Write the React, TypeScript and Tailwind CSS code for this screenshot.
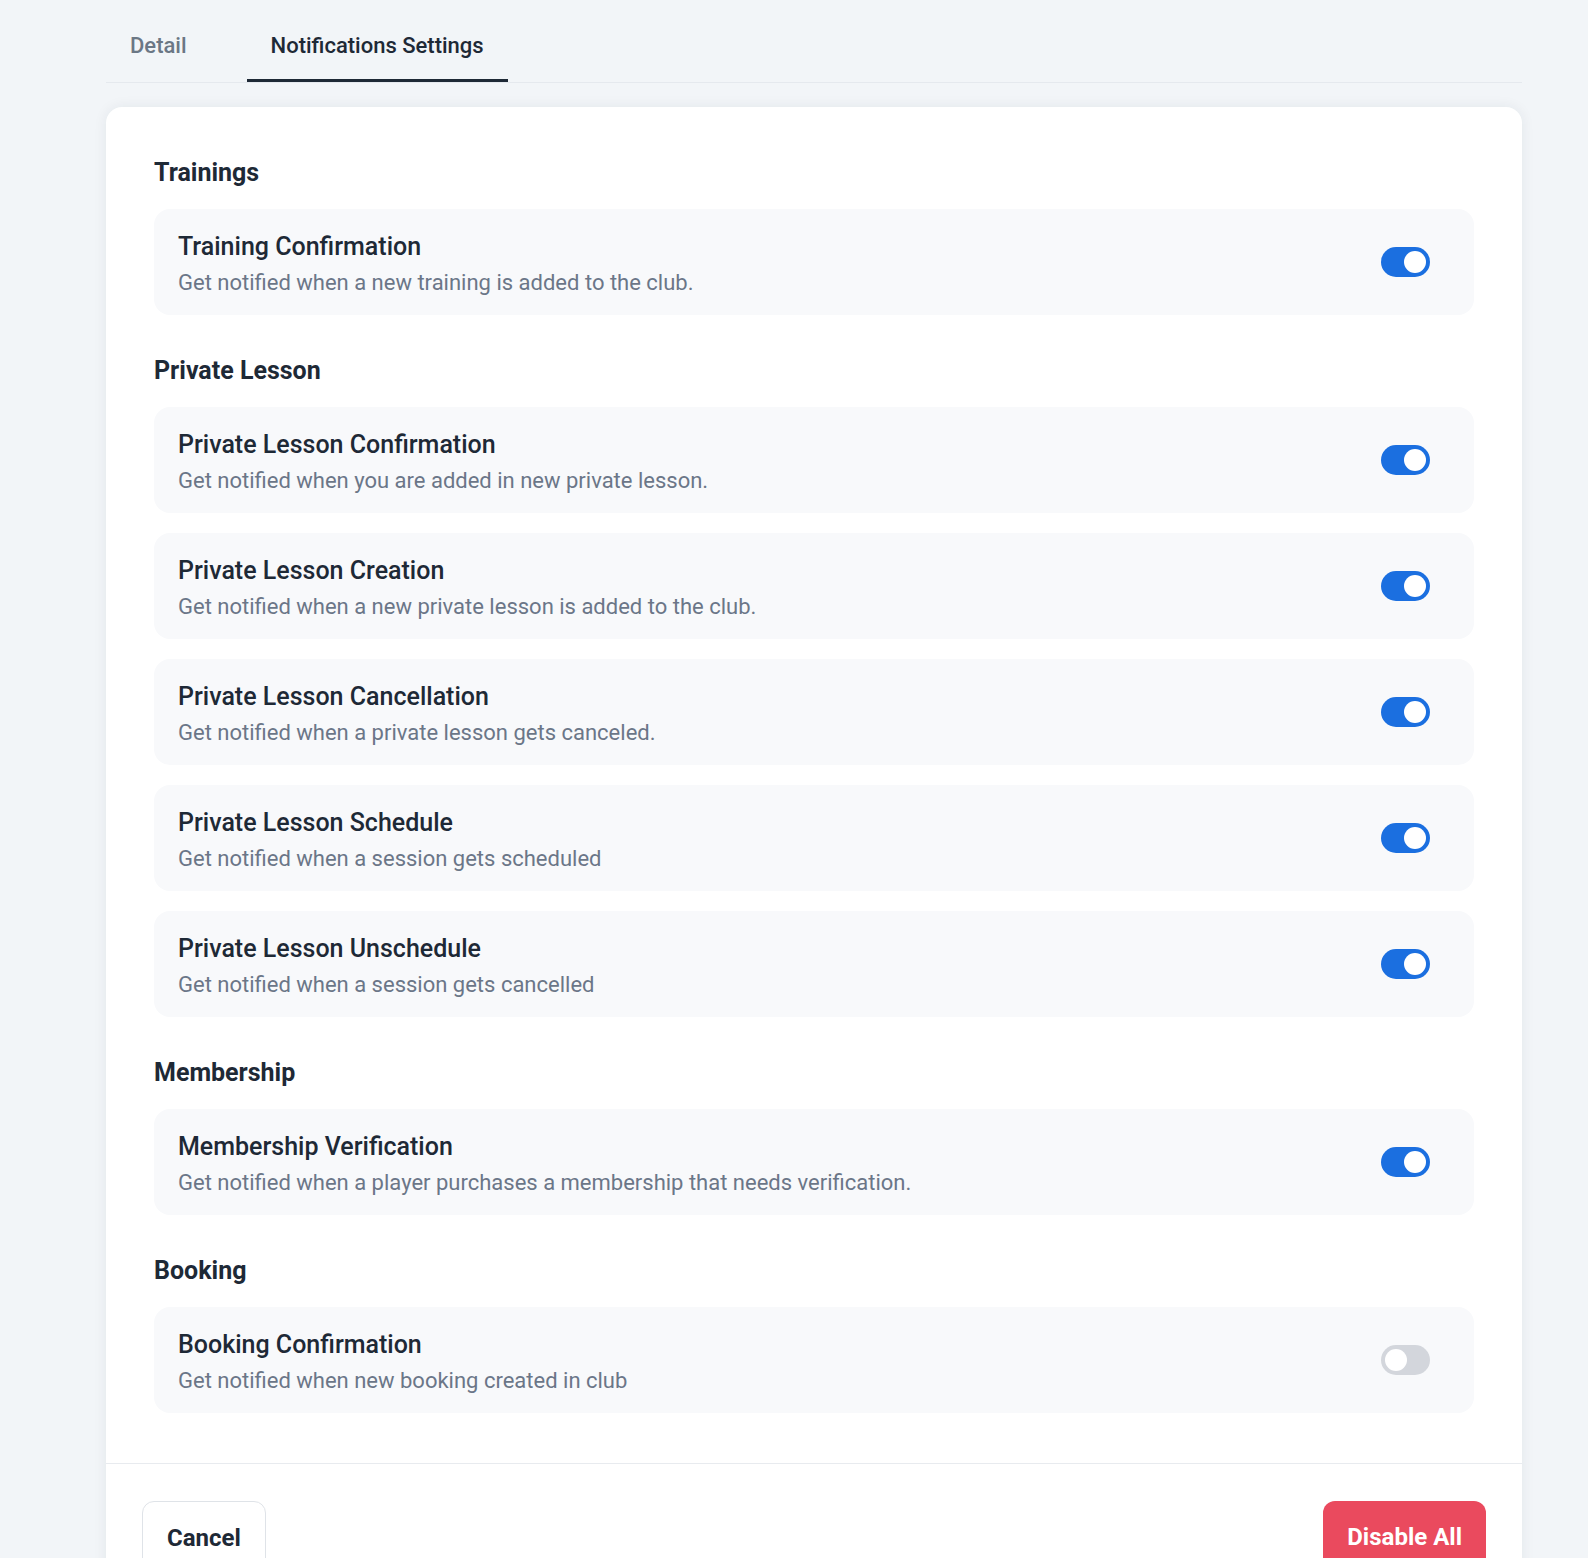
import React, { useState } from 'react';

type Item = { id: string; title: string; desc: string; on: boolean };
type Section = { title: string; items: Item[] };

const initialSections: Section[] = [
  {
    title: 'Trainings',
    items: [
      { id: 'tc', title: 'Training Confirmation', desc: 'Get notified when a new training is added to the club.', on: true },
    ],
  },
  {
    title: 'Private Lesson',
    items: [
      { id: 'plc', title: 'Private Lesson Confirmation', desc: 'Get notified when you are added in new private lesson.', on: true },
      { id: 'plcr', title: 'Private Lesson Creation', desc: 'Get notified when a new private lesson is added to the club.', on: true },
      { id: 'plca', title: 'Private Lesson Cancellation', desc: 'Get notified when a private lesson gets canceled.', on: true },
      { id: 'pls', title: 'Private Lesson Schedule', desc: 'Get notified when a session gets scheduled', on: true },
      { id: 'plu', title: 'Private Lesson Unschedule', desc: 'Get notified when a session gets cancelled', on: true },
    ],
  },
  {
    title: 'Membership',
    items: [
      { id: 'mv', title: 'Membership Verification', desc: 'Get notified when a player purchases a membership that needs verification.', on: true },
    ],
  },
  {
    title: 'Booking',
    items: [
      { id: 'bc', title: 'Booking Confirmation', desc: 'Get notified when new booking created in club', on: false },
    ],
  },
];

const Toggle = ({ on, onChange }: { on: boolean; onChange: () => void }) => (
  <button
    type="button"
    role="switch"
    aria-checked={on}
    onClick={onChange}
    className={`relative flex h-[30px] w-[49px] shrink-0 items-center rounded-full px-[4px] transition-colors ${
      on ? 'justify-end bg-[#1b6fe0]' : 'justify-start bg-[#d3d6dc]'
    }`}
  >
    <span className="block h-[22px] w-[22px] rounded-full bg-white" />
  </button>
);

export default function App() {
  const [tab, setTab] = useState<'detail' | 'notifications'>('notifications');
  const [sections, setSections] = useState<Section[]>(initialSections);

  const toggle = (id: string) => {
    setSections((prev) =>
      prev.map((s) => ({
        ...s,
        items: s.items.map((i) => (i.id === id ? { ...i, on: !i.on } : i)),
      }))
    );
  };

  const disableAll = () => {
    setSections((prev) => prev.map((s) => ({ ...s, items: s.items.map((i) => ({ ...i, on: false })) })));
  };

  return (
    <div className="min-h-screen bg-[#f2f5f8] pl-[106px] pr-[66px] font-['Roboto',sans-serif] text-[#1f2937]">
      {/* tabs */}
      <div className="flex gap-[36px] border-b border-[#e5e9ee]">
        <button
          type="button"
          onClick={() => setTab('detail')}
          className={`border-b-[3px] px-6 pt-[32px] pb-[19px] text-[22px] leading-[28px] font-medium ${
            tab === 'detail' ? 'border-[#1e2936] text-[#1e2936]' : 'border-transparent text-[#6b7785]'
          }`}
        >
          Detail
        </button>
        <button
          type="button"
          onClick={() => setTab('notifications')}
          className={`border-b-[3px] px-6 pt-[32px] pb-[19px] text-[22px] leading-[28px] font-medium ${
            tab === 'notifications' ? 'border-[#1e2936] text-[#1e2936]' : 'border-transparent text-[#6b7785]'
          }`}
        >
          Notifications Settings
        </button>
      </div>

      {/* card */}
      <div className="mt-6 rounded-2xl bg-white shadow-[0_0_14px_rgba(30,41,59,0.07)]">
        <div className="flex flex-col gap-[42px] px-12 pt-[52px] pb-[50px]">
          {sections.map((section) => (
            <div key={section.title}>
              <h3 className="mb-[22px] text-[25px] leading-[28px] font-bold text-[#1e2936]">{section.title}</h3>
              <div className="flex flex-col gap-5">
                {section.items.map((item) => (
                  <div
                    key={item.id}
                    className="flex h-[106px] items-center justify-between rounded-2xl bg-[#f8f9fb] pl-6 pr-11"
                  >
                    <div className="flex flex-col gap-[6px] pt-[5px]">
                      <div className="text-[25px] leading-[30px] font-medium text-[#1e2936]">{item.title}</div>
                      <div className="text-[22px] leading-[30px] text-[#6b7688]">{item.desc}</div>
                    </div>
                    <Toggle on={item.on} onChange={() => toggle(item.id)} />
                  </div>
                ))}
              </div>
            </div>
          ))}
        </div>

        <div className="flex items-start justify-between border-t border-[#e8ebef] px-9 pt-[37px] pb-8">
          <button
            type="button"
            className="rounded-xl border border-[#dfe3e8] bg-white px-6 py-[22px] text-[24px] leading-[28px] font-bold text-[#1e2936]"
          >
            Cancel
          </button>
          <button
            type="button"
            onClick={disableAll}
            className="rounded-xl bg-[#ea4a5e] px-6 py-[22px] text-[24px] leading-[28px] font-bold text-white"
          >
            Disable All
          </button>
        </div>
      </div>
    </div>
  );
}
